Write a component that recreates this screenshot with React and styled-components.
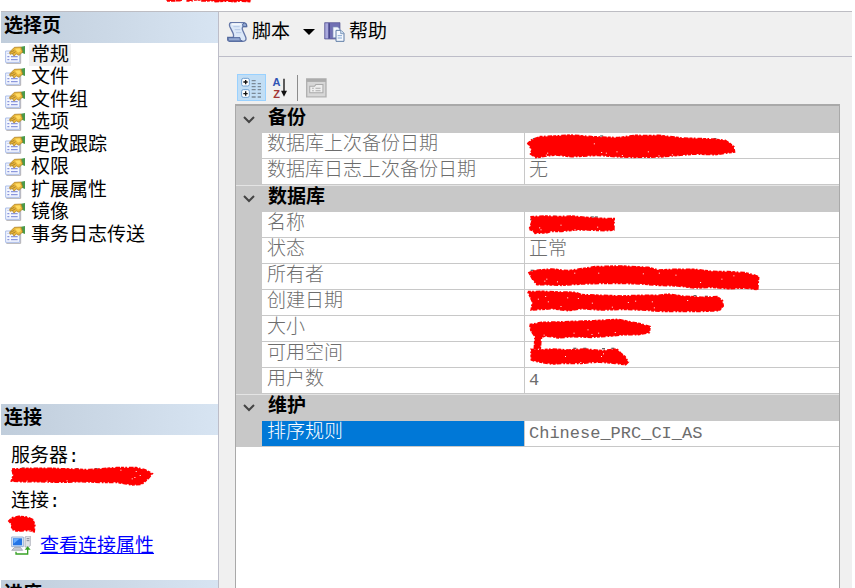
import React, { useState } from 'react';
import styled, { createGlobalStyle, css } from 'styled-components';

const pages = ['常规', '文件', '文件组', '选项', '更改跟踪', '权限', '扩展属性', '镜像', '事务日志传送'];

const marks = {
  title: {
    box: [498, 0, 256, 6],
    d: 'M500 0L524 0L524 3L500 3ZM528 0L546 0L546 2L528 2ZM562 0L576 0L576 3L562 3ZM582 0L604 0L606 3L640 2L644 5L690 3L700 5L722 3L752 5L752 0Z',
  },
  backup: {
    box: [42, 39, 620, 75],
    d: 'M38 70L50 59L75 50L120 48L170 45L230 50L310 53L360 46L400 47L430 46L500 54L590 57L630 61L644 70L656 80L658 96L640 98L600 104L540 102L470 108L430 111L350 112L300 110L250 106L170 110L120 105L95 108L62 113L46 102L50 90Z',
    holes: [[236, 70], [258, 96], [272, 98], [304, 94], [398, 94], [96, 98], [92, 104], [320, 105], [430, 106], [470, 103]],
    dark: [[54, 57], [256, 49], [596, 57]],
  },
  name: {
    box: [42, 276, 260, 72],
    d: 'M48 290L90 288L130 290L170 288L210 292L250 295L297 296L296 330L270 332L220 330L180 330L140 334L108 334L96 338L60 340L54 332L42 328L50 305Z',
    holes: [[72, 322], [76, 328], [136, 314], [246, 320], [178, 328], [252, 330]],
    dark: [[46, 300], [116, 290], [228, 292], [240, 292], [84, 324]],
  },
  owner: {
    box: [42, 72, 700, 75],
    d: 'M42 98L60 91L110 87L160 92L200 86L240 80L315 78L400 82L430 90L480 88L540 88L590 94L640 95L690 98L715 104L732 110L729 149L690 144L640 146L590 142L540 144L490 138L430 136L380 132L320 130L260 130L200 132L140 136L90 134L66 134L54 120Z',
    holes: [[88, 122], [94, 116], [126, 124], [178, 98], [384, 100], [432, 98], [482, 104], [620, 116], [656, 106], [556, 126], [250, 98]],
    dark: [[48, 92], [388, 90], [396, 92], [640, 96]],
  },
  created: {
    box: [42, 150, 590, 75],
    d: 'M38 155L80 154L130 156L180 157L200 164L260 166L320 168L380 166L430 166L460 162L500 168L560 172L606 170L622 182L624 198L612 212L560 214L500 214L440 214L380 210L320 208L260 210L200 206L160 212L110 206L80 208L48 210L52 186Z',
    holes: [[90, 168], [68, 176], [156, 172], [188, 174], [230, 188], [290, 200], [360, 182], [410, 184], [416, 202], [98, 184], [136, 198], [338, 186], [516, 180]],
    dark: [[476, 168], [536, 168], [570, 170]],
  },
  size: {
    box: [42, 228, 370, 75],
    d: 'M44 254L80 247L130 246L180 244L240 242L310 238L340 244L380 252L406 260L404 278L370 284L330 284L290 288L230 292L170 290L130 294L110 290L88 288L78 296L76 326L58 328L60 290L48 272Z',
    holes: [[86, 284], [92, 290], [176, 278], [230, 282], [250, 278], [218, 268], [300, 276]],
    dark: [[50, 268], [204, 276], [212, 270]],
  },
  free: {
    box: [42, 306, 300, 75],
    d: 'M48 328L80 330L110 327L160 330L210 327L260 332L306 327L318 340L330 350L340 366L332 374L300 370L250 366L200 370L150 370L110 372L60 364L49 360Z',
    holes: [[150, 348], [258, 348], [264, 340], [196, 366], [232, 366]],
    dark: [[176, 326], [206, 326], [262, 327], [290, 326], [260, 352]],
  },
  server: {
    box: [33, 213, 430, 69],
    d: 'M36 222L90 220L150 220L210 222L270 224L320 220L350 218L380 218L410 218L436 224L458 236L446 250L426 268L396 270L376 266L350 262L300 262L240 260L180 262L120 260L60 260L34 258L40 240Z',
    holes: [[362, 224], [408, 228], [396, 250], [404, 246], [420, 240], [200, 256], [140, 257], [80, 257]],
    dark: [[66, 220], [206, 250], [166, 228], [228, 222], [286, 222]],
  },
  login: {
    box: [33, 348, 80, 69],
    d: 'M26 378L36 368L56 364L80 366L98 374L104 390L102 410L84 406L64 408L48 408L34 402L36 390Z',
    holes: [[72, 407], [88, 406]],
    dark: [[53, 384]],
  },
};

const groups = [
  {
    title: '备份',
    rows: [
      { name: '数据库上次备份日期', mark: 'backup' },
      { name: '数据库日志上次备份日期', value: '无' },
    ],
  },
  {
    title: '数据库',
    rows: [
      { name: '名称', mark: 'name' },
      { name: '状态', value: '正常' },
      { name: '所有者', mark: 'owner' },
      { name: '创建日期', mark: 'created' },
      { name: '大小', mark: 'size' },
      { name: '可用空间', mark: 'free' },
      { name: '用户数', value: '4', latin: true },
    ],
  },
  {
    title: '维护',
    rows: [{ name: '排序规则', value: 'Chinese_PRC_CI_AS', latin: true }],
  },
];

// red marker over a private value, shapes are drawn at three units per pixel
const Scribble = ({ kind }) => {
  const { box, d, holes = [], dark = [] } = marks[kind];
  return (
    <Marker viewBox={box.join(' ')} width={Math.round(box[2] / 3)} height={Math.round(box[3] / 3)} aria-hidden="true">
      {dark.map(([x, y]) => <rect key={`${x}-${y}`} x={x - 1} y={y - 3} width="9" height="4" fill="#666" />)}
      <path d={d} fill="#f00" />
      <path d={d} fill="none" stroke="#f00" strokeWidth="5" strokeDasharray="9 4 5 6 14 3" />
      {holes.map(([x, y]) => <rect key={`${x}-${y}`} x={x} y={y} width="3" height="3" fill="#fff" />)}
    </Marker>
  );
};

const PageIcon = () => (
  <svg viewBox="0 0 60 54" width="20" height="18" aria-hidden="true">
    <path d="M4 52H47V20" fill="none" stroke="#b0aeb0" strokeWidth="3" />
    <path d="M2 15H44V49H2Z" fill="#f4f7ff" stroke="#a9bce8" strokeWidth="3" />
    <path d="M7 32H13M18 32H38M7 41H13M18 41H38" stroke="#8b97dd" strokeWidth="4" />
    <path d="M6 22H18" stroke="#c3cdf0" strokeWidth="3" />
    <path d="M48 2L60 0V24L50 20Z" fill="#4b9a4b" />
    <path d="M14 18L28 4L48 3L53 18L42 28L34 24L27 30L22 23L15 25Z" fill="#e9b63a" stroke="#a57a22" strokeWidth="2" />
    <path d="M30 8L44 7L48 15L39 20Z" fill="#ffdb63" />
    <path d="M16 19L28 13M22 23L32 17" stroke="#8d6a22" strokeWidth="2" />
  </svg>
);

const ScriptIcon = () => (
  <svg viewBox="0 0 63 60" width="21" height="20" aria-hidden="true">
    <path d="M11 2H50Q60 4 59 14H48Q44 17 47 25L56 45Q60 57 48 58H7Q0 56 1 46H18Q22 42 17 31L9 15Q5 5 11 2Z" fill="#dce8f8" stroke="#6578a8" strokeWidth="4" />
    <path d="M48 14Q44 4 52 3Q61 5 59 14ZM3 47H39Q37 57 46 57H8Q2 55 3 47Z" fill="#94a9d2" stroke="#50679c" strokeWidth="3" />
    <path d="M19 14H38M23 23H40M27 32H43" stroke="#b5c8e6" strokeWidth="3" />
    <path d="M14 6H43" stroke="#fff" strokeWidth="4" />
  </svg>
);

const HelpIcon = () => (
  <svg viewBox="0 0 63 60" width="21" height="20" aria-hidden="true">
    <path d="M2 2H48V51H2Z" fill="#7170b4" stroke="#53518f" strokeWidth="2" />
    <path d="M4 4H12V49H4Z" fill="#aaaadc" />
    <path d="M14 4H18V49H14Z" fill="#4c4a8c" />
    <path d="M27 15H41L47 21V47H27Z" fill="#f3f7ff" stroke="#8299bd" strokeWidth="2" />
    <path d="M36 25H51L60 34V58H36Z" fill="#f5f9ff" stroke="#5f7da6" strokeWidth="3" />
    <path d="M50 25V35H60" fill="#c9dcf1" stroke="#5f7da6" strokeWidth="2" />
    <path d="M41 41H54M41 48H54" stroke="#86a9d2" strokeWidth="3" />
  </svg>
);

const CategoryIcon = () => (
  <svg viewBox="0 0 63 66" width="21" height="22" aria-hidden="true">
    <rect x="2" y="4" width="23" height="23" rx="5" fill="#fff" stroke="#6f9fd0" strokeWidth="3" />
    <rect x="2" y="38" width="23" height="23" rx="5" fill="#fff" stroke="#6f9fd0" strokeWidth="3" />
    <path d="M7 15H20M14 9V22M7 50H20M14 43V56" stroke="#111" strokeWidth="4" />
    <path d="M32 11H44M32 20H44M32 29H44M32 38H44M32 49H44M32 60H44M50 20H60M50 29H60M50 38H60M50 49H60M50 60H60" stroke="#7b8996" strokeWidth="4" />
  </svg>
);

const DownArrow = () => (
  <svg viewBox="0 0 24 60" width="8" height="20" aria-hidden="true">
    <path d="M12 2V46" stroke="#111" strokeWidth="4" />
    <path d="M3 38H21L12 56Z" fill="#111" />
  </svg>
);

const PropertyPageIcon = () => (
  <svg viewBox="0 0 62 58" width="21" height="20" aria-hidden="true">
    <path d="M2 2H59V55H2Z" fill="#d7d7d7" stroke="#b1b1b1" strokeWidth="4" />
    <path d="M2 2H59V11H2Z" fill="#ababab" />
    <path d="M11 24H25L29 19H50V43H11Z" fill="#eee" stroke="#a9a9a9" strokeWidth="3" />
    <path d="M18 30H23M28 30H43M18 37H23M28 37H43" stroke="#aaa" strokeWidth="3" />
  </svg>
);

const ConnectionIcon = () => (
  <svg viewBox="0 0 60 57" width="20" height="19" aria-hidden="true">
    <path d="M42 3L48 0H58V29L52 33H42Z" fill="#e1e3e8" stroke="#9b9fab" strokeWidth="2" />
    <path d="M47 8H55M47 14H55" stroke="#858b9a" strokeWidth="3" />
    <path d="M2 3H37V32H2Z" fill="#dce8f7" stroke="#9cb3d3" strokeWidth="3" />
    <path d="M6 7H33V28H6Z" fill="#2374e5" />
    <path d="M7 8H25L8 23Z" fill="#65acff" />
    <path d="M11 34H28L35 43H2Z" fill="#c7cbd3" stroke="#8f96a3" strokeWidth="2" />
    <path d="M15 47V54H50V38" fill="none" stroke="#38a226" strokeWidth="4" />
    <path d="M41 41L50 31L59 41Z" fill="#38a226" />
  </svg>
);

const Chevron = () => (
  <svg viewBox="0 0 12 8" width="12" height="8" aria-hidden="true">
    <path d="M1 1L6 6L11 1" fill="none" stroke="#444" strokeWidth="2" />
  </svg>
);

const App = () => {
  const [page, setPage] = useState('常规');
  const [selected, setSelected] = useState('排序规则');
  const [closed, setClosed] = useState([]);

  const toggleGroup = (title) => {
    setClosed(closed.includes(title) ? closed.filter((t) => t !== title) : [...closed, title]);
  };

  return (
    <>
      <GlobalStyle />
      <Dialog>
        <TitleStrip>
          <Scribble kind="title" />
        </TitleStrip>
        <Body>
          <Sidebar>
            <SectionTitle>选择页</SectionTitle>
            <PageList>
              {pages.map((name) => (
                <li key={name}>
                  <PageButton onClick={() => setPage(name)}>
                    <PageIcon />
                    <PageName $active={page === name}>{name}</PageName>
                  </PageButton>
                </li>
              ))}
            </PageList>
            <SectionTitle>连接</SectionTitle>
            <Connection>
              <Label>服务器:</Label>
              <Hidden><Scribble kind="server" /></Hidden>
              <Label>连接:</Label>
              <Hidden><Scribble kind="login" /></Hidden>
              <LinkRow>
                <ConnectionIcon />
                <a href="#connection">查看连接属性</a>
              </LinkRow>
            </Connection>
            <SectionTitle>进度</SectionTitle>
          </Sidebar>
          <Main>
            <Toolbar>
              <ToolButton>
                <ScriptIcon />
                <ToolText>脚本</ToolText>
                <Caret />
              </ToolButton>
              <ToolButton>
                <HelpIcon />
                <ToolText>帮助</ToolText>
              </ToolButton>
            </Toolbar>
            <Content>
              <GridTools>
                <GridButton $active aria-label="按分类顺序"><CategoryIcon /></GridButton>
                <GridButton aria-label="字母顺序">
                  <Letters><LetterA>A</LetterA><LetterZ>Z</LetterZ></Letters>
                  <DownArrow />
                </GridButton>
                <Separator />
                <GridButton disabled aria-label="属性页"><PropertyPageIcon /></GridButton>
              </GridTools>
              <PropertyBox>
                <PropertyTable>
                  <colgroup>
                    <GutterCol />
                    <NameCol />
                    <col />
                  </colgroup>
                  {groups.map((group) => (
                    <tbody key={group.title}>
                      <tr>
                        <Gutter>
                          <Toggle aria-label={group.title} onClick={() => toggleGroup(group.title)}>
                            <Chevron />
                          </Toggle>
                        </Gutter>
                        <GroupTitle colSpan="2">{group.title}</GroupTitle>
                      </tr>
                      {!closed.includes(group.title) && group.rows.map((row) => (
                        <tr key={row.name} onClick={() => setSelected(row.name)}>
                          <Gutter />
                          <NameCell $selected={selected === row.name}>{row.name}</NameCell>
                          <ValueCell $latin={row.latin}>
                            {row.mark ? <Scribble kind={row.mark} /> : row.value}
                          </ValueCell>
                        </tr>
                      ))}
                    </tbody>
                  ))}
                </PropertyTable>
              </PropertyBox>
            </Content>
          </Main>
        </Body>
      </Dialog>
    </>
  );
};

export default App;

const GlobalStyle = createGlobalStyle`
  * {
    box-sizing: border-box;
  }
  body {
    margin: 0;
    background: #fff;
    color: #000;
    font-family: "Liberation Mono", "Noto Sans CJK SC", monospace;
    font-size: 19px;
    line-height: 22px;
    overflow: hidden;
  }
  button {
    font: inherit;
    color: inherit;
    background: none;
    border: 0;
    padding: 0;
  }
  svg {
    flex: none;
  }
`;

const Dialog = styled.div`
  display: flex;
  flex-direction: column;
  height: 100vh;
  padding: 0 3px 0 1px;
`;

const TitleStrip = styled.header`
  flex: none;
  height: 11px;
  padding-left: 165px;
`;

const Body = styled.div`
  flex: 1;
  min-height: 0;
  display: flex;
  border-top: 1px solid #bdbdc3;
`;

const Sidebar = styled.aside`
  flex: none;
  width: 218px;
  overflow: hidden;
  background: #fff;
  border-right: 1px solid #bdbdc8;
`;

const SectionTitle = styled.h2`
  margin: 0;
  height: 31px;
  padding: 4px 3px;
  font-size: 19px;
  line-height: 22px;
  background: linear-gradient(to right, #c0cddb, #d7e4f2);
`;

const PageList = styled.ul`
  display: grid;
  grid-auto-rows: 22px 23px;
  align-content: start;
  min-height: 361px;
  margin: 0;
  padding: 1px 4px 0;
  list-style: none;
`;

const PageButton = styled.button`
  display: flex;
  align-items: center;
  gap: 4px;
  height: 22px;
`;

const PageName = styled.span`
  height: 22px;
  padding: 0 2px;
  line-height: 24px;
  background: ${(props) => (props.$active ? '#f0f0f0' : 'transparent')};
`;

const Connection = styled.div`
  padding: 9px 10px 24px;
`;

const Label = styled.div`
  height: 22px;
  line-height: 26px;
`;

const Hidden = styled.div`
  height: 23px;
`;

const LinkRow = styled.div`
  display: flex;
  align-items: center;
  gap: 9px;
  height: 22px;

  a {
    padding-top: 4px;
    color: #00f;
  }
`;

const Main = styled.main`
  flex: 1;
  min-width: 0;
  display: flex;
  flex-direction: column;
  background: #f0f0f0;
`;

const Toolbar = styled.div`
  flex: none;
  display: flex;
  align-items: center;
  gap: 9px;
  height: 45px;
  padding: 0 8px 4px;
  border-bottom: 1px solid #bdbdc8;
`;

const ToolButton = styled.button`
  display: flex;
  align-items: center;
  gap: 4px;
`;

const ToolText = styled.span`
  padding-top: 2px;
`;

const Caret = styled.span`
  margin-left: 9px;
  border: 6px solid transparent;
  border-top-color: #000;
  border-bottom: 0;
`;

const Content = styled.div`
  flex: 1;
  min-height: 0;
  display: flex;
  flex-direction: column;
  padding: 17px 12px 0 16px;
`;

const GridTools = styled.div`
  flex: none;
  display: flex;
  align-items: center;
  height: 30px;
  padding: 0 2px 3px;
`;

const GridButton = styled.button`
  display: flex;
  align-items: center;
  justify-content: center;
  width: 29px;
  height: 27px;
  border: 1px solid transparent;
  ${(props) => props.$active && css`
    background: #c2def5;
    border-color: #99d1ff;
  `}
`;

const Letters = styled.span`
  display: grid;
  font-family: "Liberation Sans", sans-serif;
  font-size: 11px;
  font-weight: bold;
  line-height: 12px;
`;

const LetterA = styled.span`
  color: #3055b5;
`;

const LetterZ = styled.span`
  color: #a33636;
`;

const Separator = styled.span`
  width: 1px;
  height: 26px;
  margin: 0 4px 0 2px;
  background: #8c8c8c;
`;

const PropertyBox = styled.div`
  flex: 1;
  min-height: 0;
  background: #fff;
  border: 1px solid #a9a9a9;
  border-top-width: 2px;
  border-bottom: 0;
`;

const PropertyTable = styled.table`
  width: 100%;
  table-layout: fixed;
  border-collapse: separate;
  border-spacing: 0;
  color: #6d6d6d;
  font-weight: 300;

  td,
  th {
    height: 26px;
    padding: 0;
    line-height: 25px;
    vertical-align: top;
    text-align: left;
    white-space: nowrap;
  }

  tbody tr:first-child > * {
    border-top: 1px solid #c8c8c8;
  }

  tbody + tbody tr:first-child > * {
    border-top-color: #e4e4e4;
  }
`;

const GutterCol = styled.col`
  width: 26px;
`;

const NameCol = styled.col`
  width: 263px;
`;

const Gutter = styled.td`
  background: #c8c8c8;
`;

const Toggle = styled.button`
  display: flex;
  align-items: center;
  justify-content: center;
  width: 26px;
  height: 26px;
`;

const GroupTitle = styled.th`
  background: #c8c8c8;
  color: #000;
  && {
    padding-left: 6px;
  }
`;

const NameCell = styled.td`
  border-right: 1px solid #c8c8c8;
  border-bottom: 1px solid #c8c8c8;
  background: ${(props) => (props.$selected ? '#0078d7' : '#fff')};
  color: ${(props) => (props.$selected ? '#fff' : 'inherit')};
  && {
    padding-left: 5px;
  }
`;

const ValueCell = styled.td`
  border-bottom: 1px solid #c8c8c8;
  font-size: ${(props) => (props.$latin ? '17px' : '19px')};
  && {
    padding-left: 4px;
  }
`;

const Marker = styled.svg`
  display: block;
  position: relative;
  overflow: visible;
`;
